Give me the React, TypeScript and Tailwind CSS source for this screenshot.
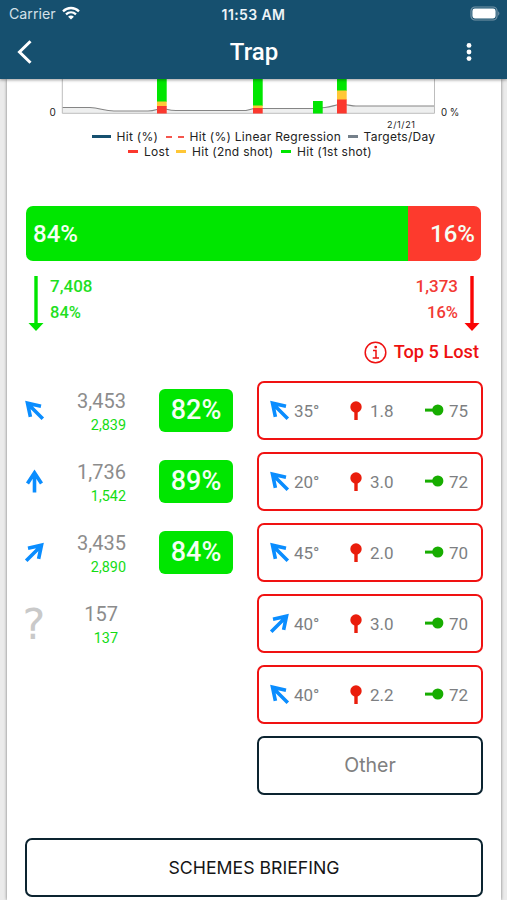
import React from 'react';

type Direction = 'left' | 'up' | 'right' | 'unknown';

interface DirectionStat {
  direction: Direction;
  targets: string;
  hits: string;
  percent?: string;
}

interface LostTarget {
  direction: Direction;
  angle: string;
  height: string;
  distance: string;
}

const directionStats: DirectionStat[] = [
  { direction: 'left', targets: '3,453', hits: '2,839', percent: '82%' },
  { direction: 'up', targets: '1,736', hits: '1,542', percent: '89%' },
  { direction: 'right', targets: '3,435', hits: '2,890', percent: '84%' },
  { direction: 'unknown', targets: '157', hits: '137' },
];

const lostTargets: LostTarget[] = [
  { direction: 'left', angle: '35°', height: '1.8', distance: '75' },
  { direction: 'left', angle: '20°', height: '3.0', distance: '72' },
  { direction: 'left', angle: '45°', height: '2.0', distance: '70' },
  { direction: 'right', angle: '40°', height: '3.0', distance: '70' },
  { direction: 'left', angle: '40°', height: '2.2', distance: '72' },
];

const arrowPaths: Record<string, string> = {
  left: 'M19.8 20.8L4.5 5.5M18 8.2L4.5 5.2L7.4 18.8',
  right: 'M3.2 20.8L18.5 5.5M5 8.2L18.5 5.2L15.6 18.8',
  up: 'M11.5 23.5V3.5M4.5 14.5L11.5 3.8L18.5 14.5',
};

const DirectionArrow: React.FC<{ direction: Direction; className?: string }> = ({ direction, className }) => (
  <svg width="23" height="24" viewBox="0 0 23 24" fill="none" stroke="#0a8dff" strokeWidth="3.6" className={className}>
    <path d={arrowPaths[direction]} />
  </svg>
);

const StatusBar = () => (
  <div className="flex h-7 items-center justify-between pl-[9px] pr-[7px] font-['Inter']">
    <div className="flex w-[100px] items-center gap-[6px]">
      <span className="text-[14.2px] text-[#d3e0e8]">Carrier</span>
      <svg width="18" height="14" viewBox="0 0 18 14" fill="none" stroke="#fff" strokeWidth="2.3" className="-mt-[2px]">
        <path d="M1 5.3C5.6 .9 12.4 .9 17 5.3" />
        <path d="M4 8.4C6.9 5.7 11.1 5.7 14 8.4" />
        <path d="M9 13.6L6.1 10.7C7.8 9.2 10.2 9.2 11.9 10.7Z" fill="#fff" stroke="none" />
      </svg>
    </div>
    <span className="-ml-[2px] text-[14px] font-semibold tracking-[0.4px] text-[#eef4f7]">11:53 AM</span>
    <div className="flex w-[100px] justify-end">
      <svg width="30" height="15" viewBox="0 0 30 15" className="-mt-[2px]">
        <rect x="1" y="1" width="26" height="13" rx="4" fill="none" stroke="#7695a8" strokeWidth="1.2" />
        <rect x="2.4" y="2.6" width="23.2" height="9.8" rx="2.4" fill="#fff" />
        <path d="M28.2 5.3C29.8 6 29.8 9 28.2 9.7Z" fill="#7695a8" />
      </svg>
    </div>
  </div>
);

const Header = () => (
  <header className="relative z-10 h-[79px] bg-[#16506f] text-white shadow-[0_1px_3px_rgba(0,0,0,0.4)]">
    <StatusBar />
    <div className="flex h-12 items-center justify-between pl-[17px] pr-[34px]">
      <svg width="16" height="24" viewBox="0 0 16 24" fill="none" stroke="#fff" strokeWidth="3">
        <path d="M13.5 1.2L2.5 12L13.5 22.8" />
      </svg>
      <h1 className="ml-[10px] mt-[-1px] text-[24px] font-medium">Trap</h1>
      <svg width="8" height="20" viewBox="0 0 8 20" fill="#fff">
        <circle cx="4" cy="3.4" r="2.4" />
        <circle cx="4" cy="10" r="2.4" />
        <circle cx="4" cy="16.6" r="2.4" />
      </svg>
    </div>
  </header>
);

const Chart = () => (
  <svg width="494" height="51" viewBox="7 79 494 51" className="block">
    <path
      d="M62 107.5H90C100 108 104 111 114 111H148C155 111 158 108.5 162 108.5S168 110.5 176 110.5H246L254 108.5H313L325 107.5C333 107 334 104.5 342 104.5S350 106 356 106H434.5V113H62Z"
      fill="#eeefef"
    />
    <path
      d="M62 107.5H90C100 108 104 111 114 111H148C155 111 158 108.5 162 108.5S168 110.5 176 110.5H246L254 108.5H313L325 107.5C333 107 334 104.5 342 104.5S350 106 356 106H434.5"
      fill="none"
      stroke="#858585"
      strokeWidth="1.2"
    />
    <path d="M62.3 79V113.3H434.5V79" fill="none" stroke="#bdbdbd" />
    {/* stacked bars: first shot, second shot, lost */}
    <g fill="#00e600">
      <rect x="157" y="79" width="9.7" height="23" />
      <rect x="253" y="79" width="9.7" height="27" />
      <rect x="313" y="101" width="9.7" height="12.5" />
      <rect x="337" y="79" width="9.7" height="12" />
    </g>
    <g fill="#ffc736">
      <rect x="157" y="101.5" width="9.7" height="5" />
      <rect x="253" y="105.5" width="9.7" height="3" />
      <rect x="337" y="90.5" width="9.7" height="9.5" />
    </g>
    <g fill="#fb382e">
      <rect x="157" y="106" width="9.7" height="7.5" />
      <rect x="253" y="108" width="9.7" height="5.5" />
      <rect x="337" y="99.5" width="9.7" height="14" />
    </g>
    <g fill="#222" fontFamily="Inter, sans-serif" fontSize="10">
      <text x="49.5" y="116">0</text>
      <text x="441" y="116" fontSize="9.7">0 %</text>
      <text x="387" y="127.5" fontSize="9" letterSpacing="0.65">2/1/21</text>
    </g>
  </svg>
);

const Legend = () => (
  <div className="-mt-px font-['Inter'] text-[12px] leading-[15px] tracking-[0.28px] text-[#222]">
    <div className="flex h-[15px] items-center pl-[85px]">
      <span className="mr-[6px] h-[3px] w-[18.5px] bg-[#16506f]" />
      <span className="w-[49px]">Hit (%)</span>
      <span className="mr-[6px] h-[2px] w-[6px] bg-[#f5564d]" />
      <span className="mr-[6px] h-[2px] w-[6px] bg-[#f5564d]" />
      <span className="w-[158px] whitespace-nowrap">Hit (%) Linear Regression</span>
      <span className="mr-[6px] h-[3px] w-[10px] bg-[#75808a]" />
      <span>Targets/Day</span>
    </div>
    <div className="flex h-[15px] items-center pl-[121px]">
      <span className="mr-[6px] h-[3.5px] w-[10px] bg-[#fb382e]" />
      <span className="w-[32px]">Lost</span>
      <span className="mr-[6px] h-[3.5px] w-[10px] bg-[#ffc736]" />
      <span className="w-[89px] whitespace-nowrap">Hit (2nd shot)</span>
      <span className="mr-[6px] h-[3.5px] w-[10px] bg-[#00e600]" />
      <span>Hit (1st shot)</span>
    </div>
  </div>
);

const DownArrow: React.FC<{ color: string }> = ({ color }) => (
  <svg width="16" height="56" viewBox="0 0 16 56" fill={color}>
    <path d="M6.3 0H9.7V47H15.5L8 55L.5 47H6.3Z" />
  </svg>
);

const Summary = () => (
  <div className="ml-[19px] mr-[20px] mt-[47px]">
    <div className="flex h-[55px] items-center overflow-hidden rounded-[7px] text-[24px] font-medium text-[#f4fff4]">
      <div className="flex h-full w-[382px] items-center bg-[#00e600] pl-[7px]">84%</div>
      <div className="flex h-full flex-1 items-center justify-end bg-[#fd3a2d] pr-[6px]">16%</div>
    </div>
    <div className="mt-[12px] flex h-[54px] justify-between pl-[2px] pr-[1px] text-[17px] leading-[26.5px]">
      <div className="flex gap-[6px] text-[#1fe01f]">
        <div className="mt-[3px]">
          <DownArrow color="#00e600" />
        </div>
        <div className="font-medium">
          <p>7,408</p>
          <p className="text-[16.5px]">84%</p>
        </div>
      </div>
      <div className="flex gap-[6px] text-right text-[#f23a34]">
        <div className="font-medium">
          <p>1,373</p>
          <p className="text-[16.5px]">16%</p>
        </div>
        <div className="mt-[3px]">
          <DownArrow color="#fa0505" />
        </div>
      </div>
    </div>
    <div className="mt-[13px] flex h-6 items-center justify-end gap-[7px] pr-[2px] text-[#ee1111]">
      <svg width="23" height="23" viewBox="0 0 23 23" fill="none" stroke="currentColor" strokeWidth="1.5">
        <circle cx="11.5" cy="11.5" r="10.3" />
        <path d="M9 9.5H12V17M8.7 17H15" />
        <circle cx="11.7" cy="6.1" r="1.4" fill="currentColor" stroke="none" />
      </svg>
      <span className="text-[18.2px] font-medium">Top 5 Lost</span>
    </div>
  </div>
);

const StatRow: React.FC<{ stat: DirectionStat }> = ({ stat }) => (
  <div className="flex h-[59px] items-center">
    <div className="-ml-px flex w-[20px] justify-center">
      {stat.direction === 'unknown' ? (
        <span className="mt-[2px] font-['DejaVu_Sans'] text-[43px] leading-none text-[#c9c9c9]">?</span>
      ) : (
        <DirectionArrow direction={stat.direction} className="-mt-px shrink-0" />
      )}
    </div>
    <div className={stat.percent ? 'mt-[6px] w-[82px] text-right' : 'mt-[6px] w-[74px] text-right'}>
      <p className="text-[20px] leading-[25px] text-[#8c8c8c]">{stat.targets}</p>
      <p className="text-[14.4px] leading-[24px] text-[#14dc14]">{stat.hits}</p>
    </div>
    {stat.percent && (
      <div className="ml-[33px] flex h-[43px] w-[74px] items-center justify-center rounded-[6px] bg-[#00e600] text-[27px] font-medium text-[#f4fff4]">
        {stat.percent}
      </div>
    )}
  </div>
);

const LostCard: React.FC<{ target: LostTarget }> = ({ target }) => (
  <div className="flex h-[59px] items-center rounded-[7px] border-[2.5px] border-[#f01212] pl-[9px] text-[17px] text-[#7d7f82]">
    <DirectionArrow direction={target.direction} className="mr-[3px] -mt-[2px]" />
    <span className="mt-[2px] w-[56px]">{target.angle}</span>
    <svg width="12" height="19" viewBox="0 0 12 19" className="mr-[8px] -mt-[1px]">
      <circle cx="6" cy="6" r="5.7" fill="#ea1d0c" />
      <rect x="4.3" y="10" width="3.4" height="9" fill="#ea1d0c" />
    </svg>
    <span className="mt-[2px] w-[55px]">{target.height}</span>
    <svg width="19" height="12" viewBox="0 0 19 12" className="mr-[5px] -mt-px">
      <circle cx="12.8" cy="6" r="5.6" fill="#17ad00" />
      <rect x="0" y="4.6" width="9" height="3" fill="#17ad00" />
    </svg>
    <span className="mt-[2px]">{target.distance}</span>
  </div>
);

export default function App() {
  return (
    <div className="h-[900px] w-[507px] overflow-hidden bg-[#ebebeb] font-['Roboto',sans-serif]">
      <Header />
      <main className="ml-[7px] h-[821px] w-[494px] bg-white shadow-[0_0_3px_rgba(0,0,0,0.5)]">
        <Chart />
        <Legend />
        <Summary />
        <div className="mx-[18px] mt-[17px] flex justify-between">
          <div className="flex flex-col gap-3">
            {directionStats.map((stat) => (
              <StatRow key={stat.direction} stat={stat} />
            ))}
          </div>
          <div className="flex w-[226px] flex-col gap-3">
            {lostTargets.map((target, i) => (
              <LostCard key={i} target={target} />
            ))}
            <button className="h-[59px] rounded-[7px] border-[2.5px] border-[#0c2430] font-['Inter'] text-[19.5px] text-[#808080]">
              Other
            </button>
          </div>
        </div>
        <button className="mx-[18px] mt-[43px] h-[59px] w-[458px] rounded-[7px] border-[2.5px] border-[#0c2430] pt-px font-['Inter'] text-[17.7px] text-[#151515]">
          SCHEMES BRIEFING
        </button>
      </main>
    </div>
  );
}
